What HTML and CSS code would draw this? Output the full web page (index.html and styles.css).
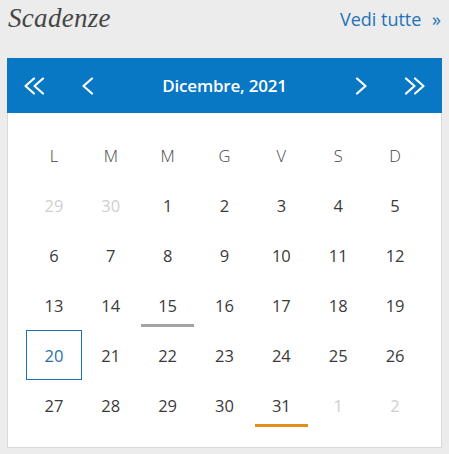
FILE: index.html
```html
<!DOCTYPE html>
<html lang="it">
<head>
<meta charset="utf-8">
<title>Scadenze</title>
<link rel="stylesheet" href="styles.css">
</head>
<body>
<div class="widget">
  <div class="head">
    <h2 class="title">Scadenze</h2>
    <a class="more" href="#">Vedi tutte <span class="raquo">»</span></a>
  </div>
  <div class="cal">
    <div class="bar">
      <button class="nav" aria-label="Anno precedente">
        <svg width="22" height="18" viewBox="0 0 22 18"><path d="M11 1.5 L2.5 9 L11 16.5 M20 1.5 L11.5 9 L20 16.5" fill="none" stroke="#fff" stroke-width="2.2" stroke-linecap="round" stroke-linejoin="round"/></svg>
      </button>
      <button class="nav" aria-label="Mese precedente">
        <svg width="14" height="18" viewBox="0 0 14 18"><path d="M11 1.5 L2.5 9 L11 16.5" fill="none" stroke="#fff" stroke-width="2.2" stroke-linecap="round" stroke-linejoin="round"/></svg>
      </button>
      <div class="month">Dicembre, 2021</div>
      <button class="nav" aria-label="Mese successivo">
        <svg width="14" height="18" viewBox="0 0 14 18"><path d="M3 1.5 L11.5 9 L3 16.5" fill="none" stroke="#fff" stroke-width="2.2" stroke-linecap="round" stroke-linejoin="round"/></svg>
      </button>
      <button class="nav" aria-label="Anno successivo">
        <svg width="22" height="18" viewBox="0 0 22 18"><path d="M2 1.5 L10.5 9 L2 16.5 M11 1.5 L19.5 9 L11 16.5" fill="none" stroke="#fff" stroke-width="2.2" stroke-linecap="round" stroke-linejoin="round"/></svg>
      </button>
    </div>
    <div class="grid">
      <div class="wd">L</div><div class="wd">M</div><div class="wd">M</div><div class="wd">G</div><div class="wd">V</div><div class="wd">S</div><div class="wd">D</div>
      <div class="day other">29</div><div class="day other">30</div><div class="day">1</div><div class="day">2</div><div class="day">3</div><div class="day">4</div><div class="day">5</div>
      <div class="day">6</div><div class="day">7</div><div class="day">8</div><div class="day">9</div><div class="day">10</div><div class="day">11</div><div class="day">12</div>
      <div class="day">13</div><div class="day">14</div><div class="day event-past">15</div><div class="day">16</div><div class="day">17</div><div class="day">18</div><div class="day">19</div>
      <div class="day today">20</div><div class="day">21</div><div class="day">22</div><div class="day">23</div><div class="day">24</div><div class="day">25</div><div class="day">26</div>
      <div class="day">27</div><div class="day">28</div><div class="day">29</div><div class="day">30</div><div class="day event">31</div><div class="day other">1</div><div class="day other">2</div>
    </div>
  </div>
</div>
</body>
</html>
```

FILE: styles.css
```css
html, body {
  margin: 0;
  padding: 0;
  background: #ececec;
}
body {
  font-family: "Open Sans", "Noto Sans", sans-serif;
  color: #3d3d3d;
}
.widget {
  width: 435px;
  padding: 0 7px 7px 7px;
}
.head {
  height: 58px;
  display: flex;
  justify-content: space-between;
  align-items: flex-start;
}
.title {
  margin: 3px 0 0 1px;
  font-family: "Liberation Serif", serif;
  font-style: italic;
  font-weight: normal;
  font-size: 27px;
  line-height: 30px;
  color: #464646;
  letter-spacing: 0.3px;
}
.more {
  margin: 5px 1px 0 0;
  font-size: 18px;
  line-height: 28px;
  color: #1f72b8;
  text-decoration: none;
}
.raquo {
  margin-left: 6px;
}
.cal {
  background: #fff;
  border: 1px solid #d9d9d9;
  border-top: none;
}
.bar {
  height: 55px;
  margin: 0 -1px;
  background: #0877c4;
  display: flex;
  align-items: center;
}
.nav {
  width: 54px;
  height: 55px;
  border: none;
  background: transparent;
  padding: 0;
  display: flex;
  align-items: center;
  justify-content: center;
}
.month {
  flex: 1;
  text-align: center;
  color: #fff;
  font-size: 17px;
  font-weight: 600;
  letter-spacing: -0.2px;
}
.grid {
  display: grid;
  grid-template-columns: repeat(7, 1fr);
  grid-auto-rows: 50px;
  padding: 17px 17.5px 17px 17.5px;
}
.wd, .day {
  display: flex;
  align-items: center;
  justify-content: center;
  font-size: 16.5px;
  position: relative;
}
.wd {
  font-weight: 300;
  color: #444;
}
.day {
  color: #3a3a3a;
}
.day.other {
  color: #cfcfcf;
}
.day.today {
  border: 1px solid #1a72b5;
  color: #2870ad;
}
.day.event-past::after,
.day.event::after {
  content: "";
  position: absolute;
  left: 2px;
  right: 2px;
  bottom: 3px;
  height: 3px;
  background: #a3a3a3;
}
.day.event::after {
  background: #e0901a;
}
```
